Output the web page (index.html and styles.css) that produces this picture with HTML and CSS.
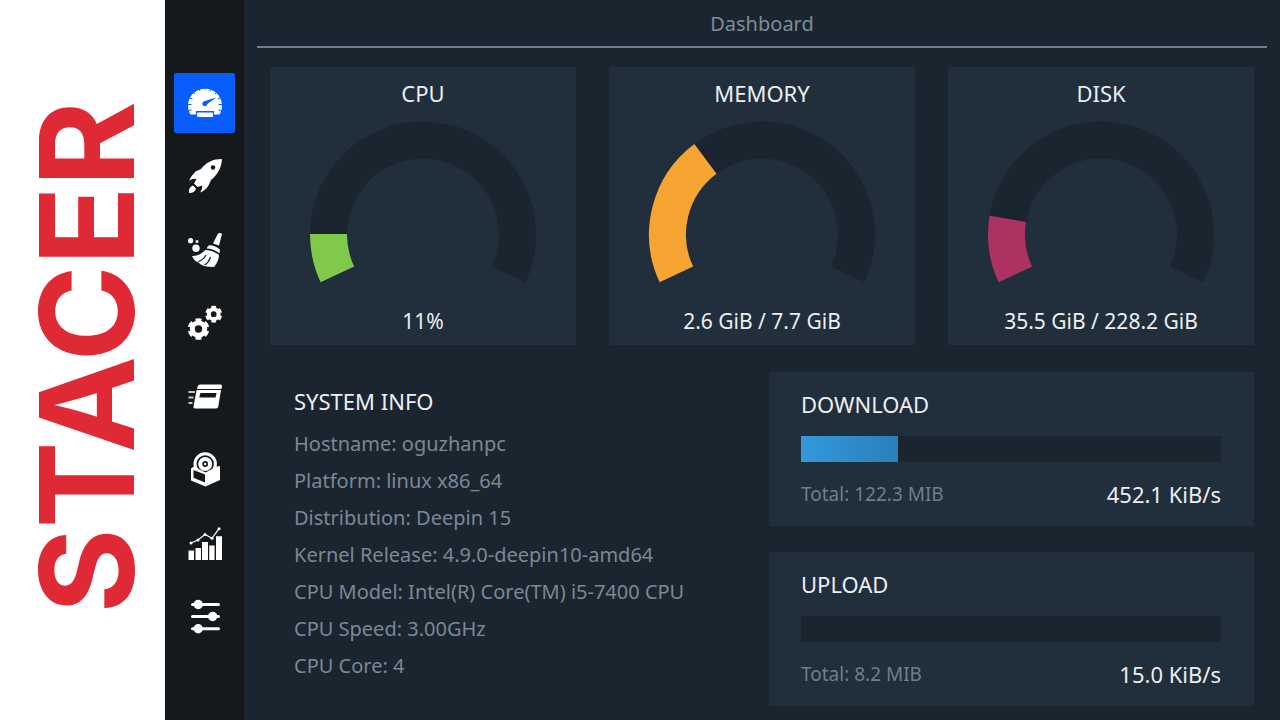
FILE: index.html
```html
<!DOCTYPE html>
<html lang="en">
<head>
<meta charset="utf-8">
<title>Stacer</title>
<link rel="stylesheet" href="styles.css">
</head>
<body>
<div class="app">
  <aside class="brand"><span class="brand-name">STACER</span></aside>

  <nav class="sidebar" aria-label="Sections">
    <button class="nav-item active" type="button" aria-label="Dashboard">
      <svg class="icon" viewBox="0 0 34 34">
        <path d="M2.500 28.500A17 17 0 1 1 31.500 28.500Z" fill="#fff"/>
        <path d="M17 0v3.500M10.500 1.500l1.500 3.500M23.500 1.500l-1.500 3.500M4.500 5.500l2.600 2.600M29.500 5.500l-2.600 2.600M1 11.500l3.500 1.500M33 11.500l-3.500 1.500M0 18.500h3.500M34 18.500h-3.500M0 25l3.500-1.300M34 25l-3.500-1.300" stroke="#095dfd" stroke-width="1"/>
        <path d="M28.500 11.300 15.700 15.500A2.500 2.500 0 1 0 19.300 18Z" fill="#095dfd"/>
        <rect x="8" y="25" width="18" height="7" fill="#095dfd"/>
        <rect x="9" y="26.500" width="16" height="4.500" rx="1" fill="#fff"/>
      </svg>
    </button>
    <button class="nav-item" type="button" aria-label="Startup apps">
      <svg class="icon" viewBox="0 0 34 34">
        <path d="M34 0C25 0 18.500 3 13 10L7.500 12.500Q3 17 1 21.500Q5 19 8.500 20L6 24.500L9.500 28L14 26.500Q15 29 12 33.500Q18 31 20.500 26.500L23 21C30.500 15 33.500 8 34 0Z" fill="#fff"/>
        <path d="M5 26.500Q0 28.500 1 34Q7 34 8 29.500Z" fill="#fff"/>
        <circle cx="25" cy="8.500" r="2.200" fill="#15191c"/>
      </svg>
    </button>
    <button class="nav-item" type="button" aria-label="System cleaner">
      <svg class="icon" viewBox="0 0 34 34">
        <path d="M30 .5Q32.500-.8 34 1L31 12.500L25 10.500Z" fill="#fff"/>
        <path d="M20.500 12.500Q25 11.500 32 16.500L31.500 20.500Q25 15.500 18.500 15.500Z" fill="#fff"/>
        <path d="M17.500 17Q25 17 31 21.700C31 27 28 31.500 26 34Q14 34 10.500 29.500Q6 28 4 23Q11 23.500 17.500 17Z" fill="#fff"/>
        <path d="M18 16.300Q25 16.500 31.500 21.200M10 28.500Q15 27.500 18 22M16.500 32Q20.500 30 22.500 24" fill="none" stroke="#15191c" stroke-width="1.200"/>
        <circle cx="2.600" cy="7.700" r="2.600" fill="#fff"/>
        <circle cx="9" cy="8.500" r="1.500" fill="#fff"/>
        <circle cx="8" cy="15.300" r="3.700" fill="#fff"/>
      </svg>
    </button>
    <button class="nav-item" type="button" aria-label="Services">
      <svg class="icon" viewBox="0 0 34 34">
        <g fill="none" stroke="#fff">
          <circle cx="10.500" cy="23" r="6.200" stroke-width="5"/>
          <circle cx="10.500" cy="23" r="9" stroke-width="3.600" pathLength="12" stroke-dasharray="1.200 .8" stroke-dashoffset=".6" transform="rotate(-90 10.500 23)"/>
          <circle cx="25.700" cy="8.200" r="4.900" stroke-width="4"/>
          <circle cx="25.700" cy="8.200" r="7" stroke-width="3" pathLength="12" stroke-dasharray="1.200 .8" stroke-dashoffset=".6" transform="rotate(-90 25.700 8.200)"/>
        </g>
      </svg>
    </button>
    <button class="nav-item" type="button" aria-label="Processes">
      <svg class="icon" viewBox="0 0 34 34">
        <path d="M12 4.500H32.500Q34.500 4.500 34 6.500L33.300 9H9L9.800 6Q10.300 4.500 12 4.500Z" fill="#fff"/>
        <path d="M8.600 10H33L30.300 26.500Q30 28.500 28 28.500H7Q5 28.500 5.500 26.500ZM12.500 13L11.200 17.500H27.500L28.600 13Z" fill="#fff" fill-rule="evenodd"/>
        <path d="M.5 12H7M.5 17.500H5.500M.5 23H4.500" stroke="#c3c8cb" stroke-width="1.800"/>
      </svg>
    </button>
    <button class="nav-item" type="button" aria-label="Uninstaller">
      <svg class="icon" viewBox="0 0 34 34">
        <circle cx="17.200" cy="11" r="11.700" fill="#fff"/>
        <circle cx="17.200" cy="11" r="8.700" fill="#15191c"/>
        <circle cx="17.200" cy="11" r="7" fill="#fff"/>
        <circle cx="17.200" cy="11" r="2.900" fill="#15191c"/>
        <circle cx="17.200" cy="11" r="1.200" fill="#fff"/>
        <path d="M3 15.500L6 13.500L17.500 19.500L29 13.500L32 13V27L17.500 33.500L3 27.500Z" fill="#fff"/>
        <path d="M5.500 17L17 21.500V29.500L5.500 24.800Z" fill="#15191c"/>
      </svg>
    </button>
    <button class="nav-item" type="button" aria-label="Resources">
      <svg class="icon" viewBox="0 0 34 34">
        <path d="M.5 23.500H6V33H.5ZM7.500 21H13V33H7.500ZM14 15H20V33H14ZM21.200 18.500H26.600V33H21.200ZM28 9.300H34V33H28Z" fill="#fff"/>
        <path d="M3 16L10 13L17 7.500L24 11.300L31 1.700" fill="none" stroke="#fff" stroke-width="1.200"/>
        <g fill="#fff"><circle cx="3" cy="16" r="1.500"/><circle cx="10" cy="13" r="1.500"/><circle cx="17" cy="7.500" r="1.500"/><circle cx="24" cy="11.300" r="1.500"/><circle cx="31" cy="1.700" r="1.500"/></g>
      </svg>
    </button>
    <button class="nav-item" type="button" aria-label="Settings">
      <svg class="icon" viewBox="0 0 34 34">
        <path d="M4.500 4.500H30.500M4.500 16.500H30.500M4.500 28.700H30.500" stroke="#fff" stroke-width="3" stroke-linecap="round"/>
        <g fill="#fff"><circle cx="10.200" cy="4.500" r="4.700"/><circle cx="24.700" cy="16.500" r="4.700"/><circle cx="10.200" cy="28.700" r="4.700"/></g>
      </svg>
    </button>
  </nav>

  <main class="main">
    <h1 class="page-title">Dashboard</h1>

    <div class="content">
      <section class="gauges">
        <article class="card gauge">
          <h2 class="title">CPU</h2>
          <svg class="dial" viewBox="0 0 228 162" role="img" aria-label="CPU usage">
            <path class="track" d="M28.350 153.440A94.500 94.500 0 1 1 199.650 153.440"/>
            <path class="arc cpu" pathLength="100" stroke-dasharray="11 200" d="M28.350 153.440A94.500 94.500 0 1 1 199.650 153.440"/>
          </svg>
          <p class="value">11%</p>
        </article>
        <article class="card gauge">
          <h2 class="title">MEMORY</h2>
          <svg class="dial" viewBox="0 0 228 162" role="img" aria-label="Memory usage">
            <path class="track" d="M28.350 153.440A94.500 94.500 0 1 1 199.650 153.440"/>
            <path class="arc memory" pathLength="100" stroke-dasharray="34 200" d="M28.350 153.440A94.500 94.500 0 1 1 199.650 153.440"/>
          </svg>
          <p class="value">2.6 GiB / 7.7 GiB</p>
        </article>
        <article class="card gauge">
          <h2 class="title">DISK</h2>
          <svg class="dial" viewBox="0 0 228 162" role="img" aria-label="Disk usage">
            <path class="track" d="M28.350 153.440A94.500 94.500 0 1 1 199.650 153.440"/>
            <path class="arc disk" pathLength="100" stroke-dasharray="15 200" d="M28.350 153.440A94.500 94.500 0 1 1 199.650 153.440"/>
          </svg>
          <p class="value">35.5 GiB / 228.2 GiB</p>
        </article>
      </section>

      <div class="details">
        <section class="info">
          <h2 class="title">SYSTEM INFO</h2>
          <ul class="info-list">
            <li>Hostname: oguzhanpc</li>
            <li>Platform: linux x86_64</li>
            <li>Distribution: Deepin 15</li>
            <li>Kernel Release: 4.9.0-deepin10-amd64</li>
            <li>CPU Model: Intel(R) Core(TM) i5-7400 CPU</li>
            <li>CPU Speed: 3.00GHz</li>
            <li>CPU Core: 4</li>
          </ul>
        </section>

        <div class="network">
          <section class="card transfer">
            <h2 class="title">DOWNLOAD</h2>
            <div class="bar"><div class="bar-fill" style="width: 23%"></div></div>
            <div class="transfer-foot"><span class="total">Total: 122.3 MIB</span><span class="rate">452.1 KiB/s</span></div>
          </section>
          <section class="card transfer">
            <h2 class="title">UPLOAD</h2>
            <div class="bar"><div class="bar-fill" style="width: 0%"></div></div>
            <div class="transfer-foot"><span class="total">Total: 8.2 MIB</span><span class="rate">15.0 KiB/s</span></div>
          </section>
        </div>
      </div>
    </div>
  </main>
</div>
</body>
</html>
```
FILE: styles.css
```css
* { box-sizing: border-box; }

body {
  margin: 0;
  background: #1b252f;
  color: #eceff2;
  font-family: "Noto Sans", "Open Sans", sans-serif;
  font-size: 22px;
  line-height: 30px;
}

h1, h2, p, ul { margin: 0; padding: 0; font-weight: 400; font-size: inherit; }

.app { display: flex; min-height: 100vh; }

/* Brand strip */
.brand {
  flex: 0 0 165px;
  display: flex;
  align-items: center;
  justify-content: center;
  padding: 0 0 6px 8px;
  background: #fff;
}
.brand-name {
  writing-mode: vertical-rl;
  transform: rotate(180deg);
  color: #df2935;
  font-family: Inter, "Open Sans", sans-serif;
  font-size: 130px;
  font-weight: 700;
  line-height: 157px;
}

/* Navigation */
.sidebar {
  flex: 0 0 79px;
  display: flex;
  flex-direction: column;
  justify-content: space-between;
  padding: 73px 9px;
  background: #15191c;
}
.nav-item {
  display: flex;
  align-items: center;
  justify-content: center;
  height: 60px;
  padding: 0;
  border: 0;
  border-radius: 2px;
  background: none;
  cursor: pointer;
}
.nav-item.active { background: #095dfd; }
.icon { width: 34px; height: 34px; overflow: visible; }

/* Main area */
.main { flex: 1; min-width: 0; padding: 0 13px; }
.page-title {
  padding: 9px 0 7px;
  border-bottom: 2px solid #6d7f90;
  color: #7e8c99;
  font-size: 20px;
  text-align: center;
}
.content { display: flex; flex-direction: column; gap: 27px; padding: 19px 13px 13px; }
.card { background: #212e3b; }

.gauges { display: grid; grid-template-columns: repeat(3, 1fr); gap: 33px; }
.gauge {
  display: flex;
  flex-direction: column;
  align-items: center;
  padding: 11px 0 9px;
}
.dial { width: 228px; margin: 13px 0 23px; }
.track, .arc { fill: none; stroke-width: 37px; }
.track { stroke: #1b252f; }
.cpu { stroke: #81c94b; }
.memory { stroke: #f6a532; }
.disk { stroke: #ac3361; }
.value { font-size: 21px; }

.details { display: grid; grid-template-columns: 472fr 485fr; gap: 27px; }
.info { padding: 14px 0 0 24px; white-space: nowrap; }
.info-list {
  margin-top: 9px;
  list-style: none;
  color: #7a8896;
  font-size: 20px;
  line-height: 37px;
}

.network { display: flex; flex-direction: column; gap: 26px; }
.transfer { padding: 17px 33px 17px 32px; }
.bar { height: 26px; margin: 17px 0; background: #1b252f; }
.bar-fill { height: 100%; background: linear-gradient(90deg, #3498db, #2980b9); }
.transfer-foot { display: flex; justify-content: space-between; }
.total { color: #6f7e8b; font-size: 19px; }
```
